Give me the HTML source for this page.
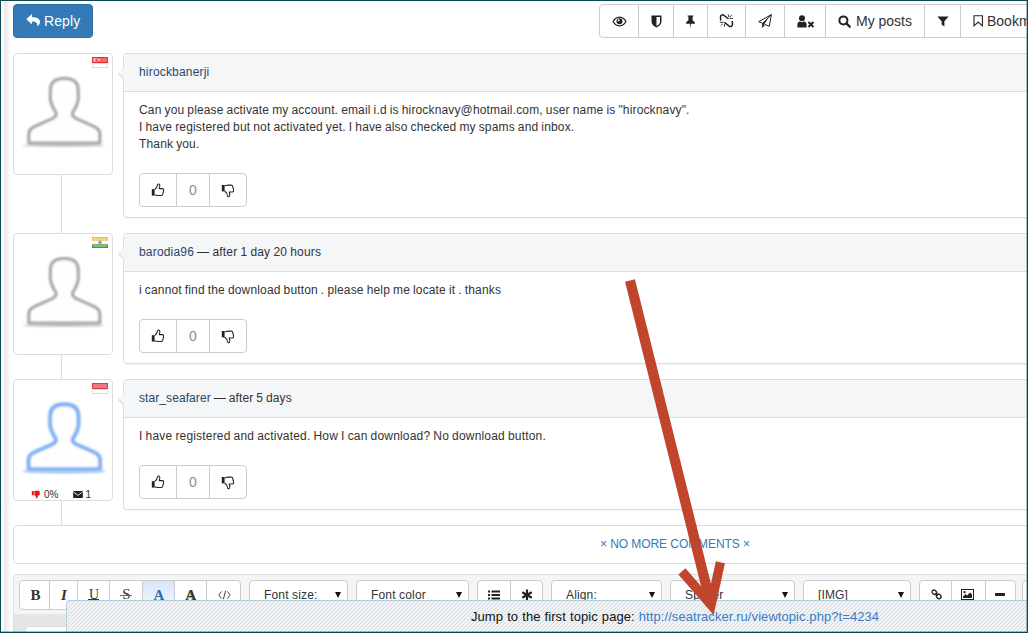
<!DOCTYPE html>
<html><head><meta charset="utf-8"><title>Topic</title>
<style>
*{box-sizing:border-box}
html,body{margin:0;padding:0}
body{width:1028px;height:633px;overflow:hidden;position:relative;background:#fff;font-family:"Liberation Sans",Arial,sans-serif;font-size:12px;color:#333}
#frame{position:absolute;left:0;top:0;width:1028px;height:633px;border:1px solid #0c4a53;z-index:50;pointer-events:none;box-shadow:inset -1px -1px 0 rgba(12,74,83,.35)}
.abs{position:absolute}
.reply{left:13px;top:4px;width:80px;height:34px;background:#337ab7;border:1px solid #2e6da4;border-radius:4px;color:#fff;font-size:14px;line-height:33px;padding-left:30px;letter-spacing:.1px}
.reply svg{position:absolute;left:12px;top:9px}
.tb{left:599px;top:4px;height:34px;width:440px;border:1px solid #ccc;border-radius:4px 0 0 4px;background:#fff}
.tb .b{position:absolute;top:0;height:32px;border-left:1px solid #ccc}
.tb .t{position:absolute;top:0;line-height:33px;font-size:14px;color:#333;letter-spacing:0}
.tb svg{position:absolute}
.av{left:13px;width:100px;height:122px;border:1px solid #ddd;border-radius:4px;background:#fff}
.av svg{position:absolute}
.av>svg:first-child{left:0;top:0}
.av .flag{left:78px;top:3px;width:16px;height:11px;opacity:.95}
.pn{left:123px;width:920px;border:1px solid #ddd;border-radius:4px;background:#fff;box-shadow:0 1px 1px rgba(0,0,0,.05)}
.pn .hd{height:38px;background:#f5f6f8;border-bottom:1px solid #ddd;border-radius:3px 0 0 0;padding-left:15px;line-height:36px;font-size:12px;color:#333;letter-spacing:.18px;word-spacing:-.4px}
.pn .hd a{color:#27466a;text-decoration:none}
.pn .tx{position:absolute;left:15px;top:48px;line-height:17px;font-size:12px;color:#333;white-space:nowrap;letter-spacing:.15px;word-spacing:-.45px}
.pn .ar{position:absolute;left:-7px;top:13px;width:0;height:0;border-top:6.500px solid transparent;border-bottom:6.500px solid transparent;border-right:6.500px solid #ddd;margin-left:.5px;margin-top:.5px}
.pn .ar:after{content:"";position:absolute;left:1.200px;top:-6.500px;border-top:6.500px solid transparent;border-bottom:6.500px solid transparent;border-right:6.500px solid #f5f6f8}
.vt{position:absolute;left:15px;width:108px;height:34px;border:1px solid #ccc;border-radius:4px;background:#fff}
.vt i{position:absolute;top:0;height:32px;border-left:1px solid #ccc}
.vt span{position:absolute;left:37px;width:32px;text-align:center;top:0;line-height:32px;font-size:14px;color:#8c8c8c}
.vt svg{position:absolute;top:9px}
.vline{left:61px;width:1px;background:#ddd}
.ed{left:13px;top:574px;width:1030px;height:70px;border:1px solid #ddd;border-radius:4px 0 0 0;background:#f5f5f5}
.eb{position:absolute;top:580px;height:30px;border:1px solid #ccc;border-radius:4px;background:#fff}
.eb i{position:absolute;top:0;height:28px;border-left:1px solid #ccc}
.eb span{position:absolute;top:0;line-height:28px;font-size:12px;color:#333;white-space:nowrap;letter-spacing:.15px}
.eb b{position:absolute;top:0;line-height:28px;font-family:"Liberation Serif",serif;font-size:15px;color:#333;text-align:center}
.eb em{position:absolute;top:11px;width:0;height:0;margin-left:.5px;border-left:3px solid transparent;border-right:3px solid transparent;border-top:6px solid #111}
.eb svg{position:absolute}
.st{left:66px;top:600px;width:962px;height:33px;border-top:1px solid #b4d0de;border-left:1px solid #b4d0de;border-radius:4px 0 0 0;background:#f1f4f7;overflow:hidden;font-size:13px;line-height:30px;color:#111;white-space:nowrap;z-index:20}
.st span{position:absolute;left:404px;top:1px;letter-spacing:.07px;word-spacing:.4px}
.st a{color:#3b7cc0;text-decoration:none}
</style></head><body>
<div id="frame"></div>
<div class="abs" style="left:2px;top:1px;width:9px;height:631px;background:linear-gradient(90deg,#fff 0,#e9e9e9 38%,#f2f2f2 60%,#fff 100%)"></div>

<div class="abs reply"><svg width="16" height="15" viewBox="0 0 16 15"><path d="M5.900 0.100 L0.300 5.300 L5.900 10.500 V7.400 C9.700 7.400 11.700 8.500 11.300 12.400 C13 11 14 9.600 14 8 C14 4.600 10.600 3.200 5.900 3.200 Z" fill="#fff"/></svg>Reply</div>

<div class="abs tb">
 <div class="b" style="left:38px"></div><div class="b" style="left:73px"></div><div class="b" style="left:107px"></div><div class="b" style="left:145px"></div><div class="b" style="left:184px"></div><div class="b" style="left:225px"></div><div class="b" style="left:324px"></div><div class="b" style="left:360px"></div>
 <!-- eye -->
 <svg style="left:12px;top:11px" width="15" height="11" viewBox="0 0 15 11"><path d="M7.5 0.6 C4 0.6 1.6 3 0.4 5.5 C1.6 8 4 10.4 7.5 10.4 C11 10.4 13.4 8 14.6 5.5 C13.4 3 11 0.6 7.5 0.6 Z M7.5 1.8 C10 1.8 12 3.4 13.2 5.5 C12 7.6 10 9.2 7.5 9.2 C5 9.2 3 7.6 1.8 5.5 C3 3.4 5 1.8 7.5 1.8 Z" fill="#222"/><circle cx="7.5" cy="5.3" r="3" fill="#222"/><circle cx="6.6" cy="4.3" r="1" fill="#fff"/></svg>
 <!-- shield -->
 <svg style="left:51px;top:10px" width="11" height="13" viewBox="0 0 11 13"><path d="M0.5 0.5 H10.5 V6.5 C10.5 9.5 8 11.5 5.5 12.6 C3 11.5 0.5 9.5 0.5 6.5 Z" fill="#222"/><path d="M5.5 2 H9 V6.5 C9 8.5 7.4 10 5.5 11 Z" fill="#fff"/></svg>
 <!-- pin -->
 <svg style="left:85px;top:10px" width="11" height="14" viewBox="0 0 11 14"><path d="M2.6 0.5 H8.4 V1.6 H7.6 V5.6 C9 6.2 10 7.4 10 8.8 H6 L5.5 13.4 L5 8.8 H1 C1 7.4 2 6.2 3.4 5.6 V1.6 H2.6 Z" fill="#222"/></svg>
 <!-- chain broken -->
 <svg style="left:119px;top:9px" width="15" height="15" viewBox="0 0 15 15"><g fill="none" stroke="#222" stroke-width="1.5" stroke-linecap="round" stroke-linejoin="round"><path d="M1.7 6 L1.5 3.2 C1.4 1.4 3.4 0.2 4.9 1.3 L9 4.5"/><path d="M13.3 7.6 L13.5 10.2 C13.6 12 11.600 13.2 10.100 12.100 L5.800 8.700"/></g><g stroke="#222" stroke-width=".9" stroke-linecap="round"><path d="M9.300 0.700 L9.700 2.700"/><path d="M12.500 1.100 L10.900 3.100"/><path d="M13.600 4.400 L11.100 4.600"/><path d="M1.200 8.300 L4.300 8.300"/><path d="M1.950 11.600 L3.500 10.100"/><path d="M5.500 10.500 L5.500 12.400"/></g></svg>
 <!-- paper plane o -->
 <svg style="left:158px;top:9px" width="15" height="15" viewBox="0 0 15 15"><path d="M13.400 0.600 L0.700 7.700 L4.700 9.300 L4.400 13.300 L7 10.500 L11.300 12.300 Z M13.400 0.600 L4.700 9.300" fill="none" stroke="#222" stroke-width="1" stroke-linejoin="round"/><path d="M4.700 9.300 L4.400 13.300 L10 4.600 Z" fill="#222"/></svg>
 <!-- user times -->
 <svg style="left:197px;top:10px" width="18" height="13" viewBox="0 0 18 13"><circle cx="5" cy="3.2" r="3" fill="#222"/><path d="M0.4 12.4 V9.6 C0.4 7.4 2 6.4 3 6.4 C3.6 6.9 4.3 7.1 5 7.1 C5.7 7.1 6.4 6.9 7 6.4 C8 6.4 9.6 7.4 9.6 9.6 V12.4 Z" fill="#222"/><path d="M11.4 7 L16.4 12 M16.4 7 L11.4 12" stroke="#222" stroke-width="1.9" fill="none"/></svg>
 <!-- search -->
 <svg style="left:238px;top:10px" width="14" height="14" viewBox="0 0 14 14"><circle cx="5.4" cy="5.4" r="4" fill="none" stroke="#222" stroke-width="2"/><path d="M8.4 8.4 L11.8 11.8" stroke="#222" stroke-width="2.3" stroke-linecap="round"/></svg>
 <div class="t" style="left:256px">My posts</div>
 <!-- filter -->
 <svg style="left:337px;top:11px" width="12" height="11" viewBox="0 0 12 11"><path d="M0.4 0.4 H11.6 L7.4 5.2 V10.6 L4.6 8.4 V5.2 Z" fill="#222"/></svg>
 <!-- bookmark o -->
 <svg style="left:373px;top:10px" width="11" height="12" viewBox="0 0 11 12"><path d="M1 0.8 H9.4 V10.8 L5.2 7 L1 10.8 Z" fill="none" stroke="#222" stroke-width="1.1" stroke-linejoin="miter"/></svg>
 <div class="t" style="left:387px">Bookmarks</div>
</div>

<div class="abs vline" style="top:175px;height:360px"></div>

<!-- comment 1 -->
<div class="abs av" style="top:53px">
 <svg width="98" height="120" viewBox="0 0 98 120"><defs><filter id="bl" x="-20%" y="-20%" width="140%" height="140%"><feGaussianBlur stdDeviation="0.950"/></filter><filter id="bl2" x="-20%" y="-200%" width="140%" height="500%"><feGaussianBlur stdDeviation="1.2"/></filter></defs>
 <ellipse cx="49.5" cy="91.400" rx="41" ry="1.300" fill="#bbb" filter="url(#bl2)"/>
 <path id="person" d="M50.300 24.500 C41.500 24.500 36.900 27.500 36.500 35 L36.300 44 C36.500 49 38.500 52 39.600 54.500 C41 57 42.300 58 42.300 60 C42.300 62.500 40.500 63.500 37.500 65 L21 72.300 C17 74 14.800 76 14.800 80 V89 H85.800 V80 C85.800 76 83.600 74 79.600 72.300 L63.100 65 C60.100 63.500 58.300 62.500 58.300 60 C58.300 58 59.600 57 61 54.500 C62.100 52 64.100 49 64.300 44 L64.100 35 C63.700 27.500 59.100 24.500 50.300 24.500 Z" fill="#fefefe" stroke="#9f9f9f" stroke-width="3" stroke-linejoin="round" filter="url(#bl)"/></svg>
 <svg class="flag" viewBox="0 0 16 11"><rect width="16" height="11" fill="#fdfdfd"/><rect x=".5" y="6.500" width="15" height="4" fill="#fff" stroke="#dcdcdc" stroke-width="1"/><rect width="16" height="6" fill="#e8272f"/><rect x="1" y="1" width="14" height="4" fill="#ef6369"/><circle cx="3.400" cy="3" r="1.800" fill="#fff"/><circle cx="4.300" cy="3" r="1.500" fill="#ec4a51"/><rect x="5.400" y="2" width="2.600" height="1.300" fill="#fbd3d5"/></svg>
</div>
<div class="abs pn" style="top:53px;height:165px"><div class="ar"></div><div class="hd"><a>hirockbanerji</a></div>
 <div class="tx">Can you please activate my account. email i.d is hirocknavy@hotmail.com, user name is "hirocknavy".<br>I have registered but not activated yet. I have also checked my spams and inbox.<br>Thank you.</div>
 <div class="vt" style="top:119px"><svg style="left:11px" width="14" height="14" viewBox="0 0 14 14"><use href="#tup"/></svg><i style="left:36px"></i><span>0</span><i style="left:69px"></i><svg style="left:81px;top:10px" width="14" height="14" viewBox="0 0 14 14"><use href="#tdn"/></svg></div>
</div>

<!-- comment 2 -->
<div class="abs av" style="top:233px">
 <svg width="98" height="120" viewBox="0 0 98 120"><ellipse cx="49.5" cy="91.400" rx="41" ry="1.300" fill="#bbb" filter="url(#bl2)"/><use href="#person"/></svg>
 <svg class="flag" viewBox="0 0 16 11"><rect width="16" height="11" fill="#fff"/><rect width="16" height="3.700" fill="#f3b73c"/><rect x="1" y="1" width="14" height="2" fill="#f8d171"/><rect y="7.300" width="16" height="3.700" fill="#3f8f42"/><rect x="1" y="8" width="14" height="2" fill="#74bb77"/><circle cx="8" cy="5.300" r="1.900" fill="#8a98dc"/></svg>
</div>
<div class="abs pn" style="top:233px;height:131px"><div class="ar"></div><div class="hd"><a>barodia96</a> — after 1 day 20 hours</div>
 <div class="tx">i cannot find the download button . please help me locate it . thanks</div>
 <div class="vt" style="top:85px"><svg style="left:11px" width="14" height="14" viewBox="0 0 14 14"><use href="#tup"/></svg><i style="left:36px"></i><span>0</span><i style="left:69px"></i><svg style="left:81px;top:10px" width="14" height="14" viewBox="0 0 14 14"><use href="#tdn"/></svg></div>
</div>

<!-- comment 3 -->
<div class="abs av" style="top:379px">
 <svg width="98" height="120" viewBox="0 0 98 120"><ellipse cx="50" cy="91.200" rx="42" ry="2" fill="#8dbbf4" filter="url(#bl2)"/><path d="M50.300 24.500 C41.500 24.500 36.900 27.500 36.500 35 L36.300 44 C36.500 49 38.500 52 39.600 54.500 C41 57 42.300 58 42.300 60 C42.300 62.500 40.500 63.500 37.500 65 L21 72.300 C17 74 14.800 76 14.800 80 V89 H85.800 V80 C85.800 76 83.600 74 79.600 72.300 L63.100 65 C60.100 63.500 58.300 62.500 58.300 60 C58.300 58 59.600 57 61 54.500 C62.100 52 64.100 49 64.300 44 L64.100 35 C63.700 27.500 59.100 24.500 50.300 24.500 Z" fill="none" stroke="#cfe2fb" stroke-width="5.500" stroke-linejoin="round" filter="url(#bl2)"/><path d="M50.300 24.500 C41.500 24.500 36.900 27.500 36.500 35 L36.300 44 C36.500 49 38.500 52 39.600 54.500 C41 57 42.300 58 42.300 60 C42.300 62.500 40.500 63.500 37.500 65 L21 72.300 C17 74 14.800 76 14.800 80 V89 H85.800 V80 C85.800 76 83.600 74 79.600 72.300 L63.100 65 C60.100 63.500 58.300 62.500 58.300 60 C58.300 58 59.600 57 61 54.500 C62.100 52 64.100 49 64.300 44 L64.100 35 C63.700 27.500 59.100 24.500 50.300 24.500 Z" fill="#fefeff" stroke="#78adf0" stroke-width="3.400" stroke-linejoin="round" filter="url(#bl)"/></svg>
 <svg class="flag" viewBox="0 0 16 11"><rect width="16" height="11" fill="#fdfdfd"/><rect x=".5" y="6.500" width="15" height="4" fill="#fff" stroke="#dcdcdc" stroke-width="1"/><rect width="16" height="6" fill="#d9343d"/><rect x="1" y="1" width="14" height="4" fill="#e8767c"/></svg>
 <svg style="left:17px;top:110px" width="10" height="9" viewBox="0 0 14 14"><path d="M0.500 1.500 H3.500 V8 H0.500 Z M4.500 2 C6 1 7 1 9 1 H11 C12.500 1 13 2.500 12.600 3.500 C13.200 4.500 13 5.500 12.600 6 C13 7 12.800 8 12 8.500 H9.500 C9.800 10 10 11 9.500 12.500 C9 13.500 7.500 13.500 7.500 12.500 C7.500 10.500 6 9 4.500 8 Z" fill="#e11"/></svg>
 <div class="abs" style="left:30px;top:109px;font-size:10px;line-height:12px;color:#333;letter-spacing:0">0%</div>
 <svg style="left:59px;top:111px" width="10" height="7" viewBox="0 0 11 8"><rect width="11" height="8" rx="1" fill="#222"/><path d="M0.500 1.200 L5.500 5 L10.500 1.200" fill="none" stroke="#fff" stroke-width="1"/></svg>
 <div class="abs" style="left:71.500px;top:109px;font-size:10px;line-height:12px;color:#333">1</div>
</div>
<div class="abs pn" style="top:379px;height:131px"><div class="ar"></div><div class="hd" style="letter-spacing:.08px"><a>star_seafarer</a> — after 5 days</div>
 <div class="tx" style="letter-spacing:.18px">I have registered and activated. How I can download? No download button.</div>
 <div class="vt" style="top:85px"><svg style="left:11px" width="14" height="14" viewBox="0 0 14 14"><use href="#tup"/></svg><i style="left:36px"></i><span>0</span><i style="left:69px"></i><svg style="left:81px;top:10px" width="14" height="14" viewBox="0 0 14 14"><use href="#tdn"/></svg></div>
</div>

<svg width="0" height="0" style="position:absolute"><defs>
 <g id="tup"><path d="M0.800 6.200 H3.600 V12.600 H0.800 Z" fill="#222"/><path d="M3.600 6.600 C5.200 5.400 6.400 3.600 6.600 1.600 C6.700 0.700 8.600 0.600 8.800 2.400 C8.900 3.600 8.500 4.800 8.200 5.600 H11.400 C12.600 5.600 12.900 6.800 12.300 7.500 C12.800 8.200 12.600 9 12 9.400 C12.300 10.200 12 10.800 11.500 11.100 C11.600 12 11 12.500 10.200 12.500 H7.400 C6 12.500 5.200 12 3.600 11.800" fill="none" stroke="#222" stroke-width="1.050" stroke-linejoin="round"/></g>
 <g id="tdn"><path d="M0.800 1 H3.600 V7.400 H0.800 Z" fill="#222"/><path d="M3.600 7 C5.200 8.200 6.400 10 6.600 12 C6.700 12.900 8.600 13 8.800 11.200 C8.900 10 8.500 8.800 8.200 8 H11.400 C12.600 8 12.900 6.800 12.300 6.100 C12.800 5.400 12.600 4.600 12 4.200 C12.300 3.400 12 2.800 11.500 2.500 C11.600 1.600 11 1.100 10.200 1.100 H7.400 C6 1.100 5.200 1.600 3.600 1.800" fill="none" stroke="#222" stroke-width="1.050" stroke-linejoin="round"/></g>
</defs></svg>

<div class="abs" style="left:13px;top:525px;width:1030px;height:39px;border:1px solid #ddd;border-radius:4px;background:#fff"></div>
<div class="abs" style="left:600px;top:537px;font-size:12px;line-height:14px;color:#337ab7;white-space:nowrap;letter-spacing:-.07px">× NO MORE COMMENTS ×</div>

<!-- editor -->
<div class="abs ed"></div>
<div class="abs" style="left:14px;top:614px;width:1014px;height:20px;background:#e6e6e6"></div>
<div class="abs" style="left:25px;top:626px;width:1010px;height:10px;background:#fff;border:1px solid #ddd;border-radius:4px 0 0 0"></div>
<div class="eb" style="left:19px;width:222px">
 <div class="abs" style="left:123px;top:0;width:32px;height:28px;background:linear-gradient(#d6e6f9,#f6fafe)"></div>
 <b style="left:1px;width:29px;font-weight:bold">B</b><i style="left:29px"></i>
 <b style="left:30px;width:28px;font-style:italic;font-weight:bold">I</b><i style="left:57px"></i>
 <b style="left:58px;width:32px;font-weight:normal;font-size:14px;line-height:27px">U</b><div class="abs" style="left:68px;top:18px;width:11px;height:1px;background:#333"></div><i style="left:89px"></i>
 <b style="left:90px;width:33px;font-weight:normal;font-size:15px;line-height:27px">S</b><div class="abs" style="left:100px;top:14px;width:12px;height:1px;background:#666"></div><i style="left:122px"></i>
 <b style="left:123px;width:32px;color:#2a6db0;font-weight:bold">A</b><i style="left:154px"></i>
 <b style="left:155px;width:32px;font-weight:bold;text-shadow:-1px 1px 1px #aaa">A</b><i style="left:186px"></i>
 <svg style="left:198px;top:9px" width="13" height="10" viewBox="0 0 13 10"><path d="M3.600 1.500 L0.800 5 L3.600 8.500 M9.400 1.500 L12.200 5 L9.400 8.500 M7.600 0.800 L5.400 9.200" fill="none" stroke="#444" stroke-width="1"/></svg>
</div>
<div class="eb" style="left:249px;width:99px"><span style="left:14px">Font size:</span><em style="left:84px"></em></div>
<div class="eb" style="left:356px;width:113px"><span style="left:14px">Font color</span><em style="left:98px"></em></div>
<div class="eb" style="left:477px;width:66px"><i style="left:32px"></i>
 <svg style="left:10px;top:9px" width="12" height="10" viewBox="0 0 12 10"><path d="M0 0.500 H2 V2.500 H0 Z M0 4 H2 V6 H0 Z M0 7.500 H2 V9.500 H0 Z M3.500 0.500 H12 V2.500 H3.500 Z M3.500 4 H12 V6 H3.500 Z M3.500 7.500 H12 V9.500 H3.500 Z" fill="#222"/></svg>
 <svg style="left:43px;top:8px" width="12" height="12" viewBox="0 0 12 12"><path d="M6 0.500 V11.500 M1.200 3.200 L10.800 8.800 M10.800 3.200 L1.200 8.800" stroke="#222" stroke-width="2.200" fill="none"/></svg>
</div>
<div class="eb" style="left:551px;width:111px"><span style="left:14px">Align:</span><em style="left:96px"></em></div>
<div class="eb" style="left:670px;width:125px"><span style="left:14px">Spoiler</span><em style="left:110px"></em></div>
<div class="eb" style="left:803px;width:108px"><span style="left:14px">[IMG]</span><em style="left:93px"></em></div>
<div class="eb" style="left:919px;width:97px"><i style="left:31px"></i><i style="left:65px"></i>
 <svg style="left:10px;top:7px" width="13" height="13" viewBox="0 0 13 13"><g fill="none" stroke="#222" stroke-width="1.300"><ellipse cx="4.300" cy="4.300" rx="2.500" ry="2" transform="rotate(40 4.300 4.300)"/><ellipse cx="8.700" cy="8.400" rx="2.500" ry="2" transform="rotate(40 8.700 8.400)"/><path d="M5.300 5.200 L7.700 7.500"/></g></svg>
 <svg style="left:41px;top:8px" width="13" height="11" viewBox="0 0 13 11"><rect x="0.500" y="0.500" width="12" height="10" fill="#fff" stroke="#222" stroke-width="1"/><path d="M2 9 V7.500 L4.500 5 L6 6.500 L9 3.500 L11 5.500 V9 Z" fill="#222"/><circle cx="3.600" cy="3.200" r="1.100" fill="#222"/></svg>
 <svg style="left:75px;top:12px" width="10" height="3" viewBox="0 0 10 3"><rect width="10" height="3" rx=".5" fill="#222"/></svg>
</div>
<div class="eb" style="left:1022px;width:40px"></div>

<!-- status bar -->
<div class="abs st"><svg class="abs" style="left:0;top:0" width="962" height="33"><defs><pattern id="hp" width="4" height="4" patternUnits="userSpaceOnUse"><path d="M-1 5 L5 -1 M-1 1 L1 -1 M3 5 L5 3" stroke="#c9ced3" stroke-width=".7" fill="none"/></pattern></defs><rect width="962" height="33" fill="url(#hp)"/></svg><span>Jump to the first topic page: <a>http://seatracker.ru/viewtopic.php?t=4234</a></span></div>

<!-- red arrow -->
<svg class="abs" style="left:0;top:0;z-index:30" width="1028" height="633" viewBox="0 0 1028 633"><g fill="none" stroke="#c1442d"><path d="M630 280.500 L711 604.900" stroke-width="10.200"/><path d="M681.950 571.400 L711.080 604.900 L720.400 562.200" stroke-width="9.300" stroke-linejoin="miter" stroke-miterlimit="10"/></g></svg>

</body></html>
